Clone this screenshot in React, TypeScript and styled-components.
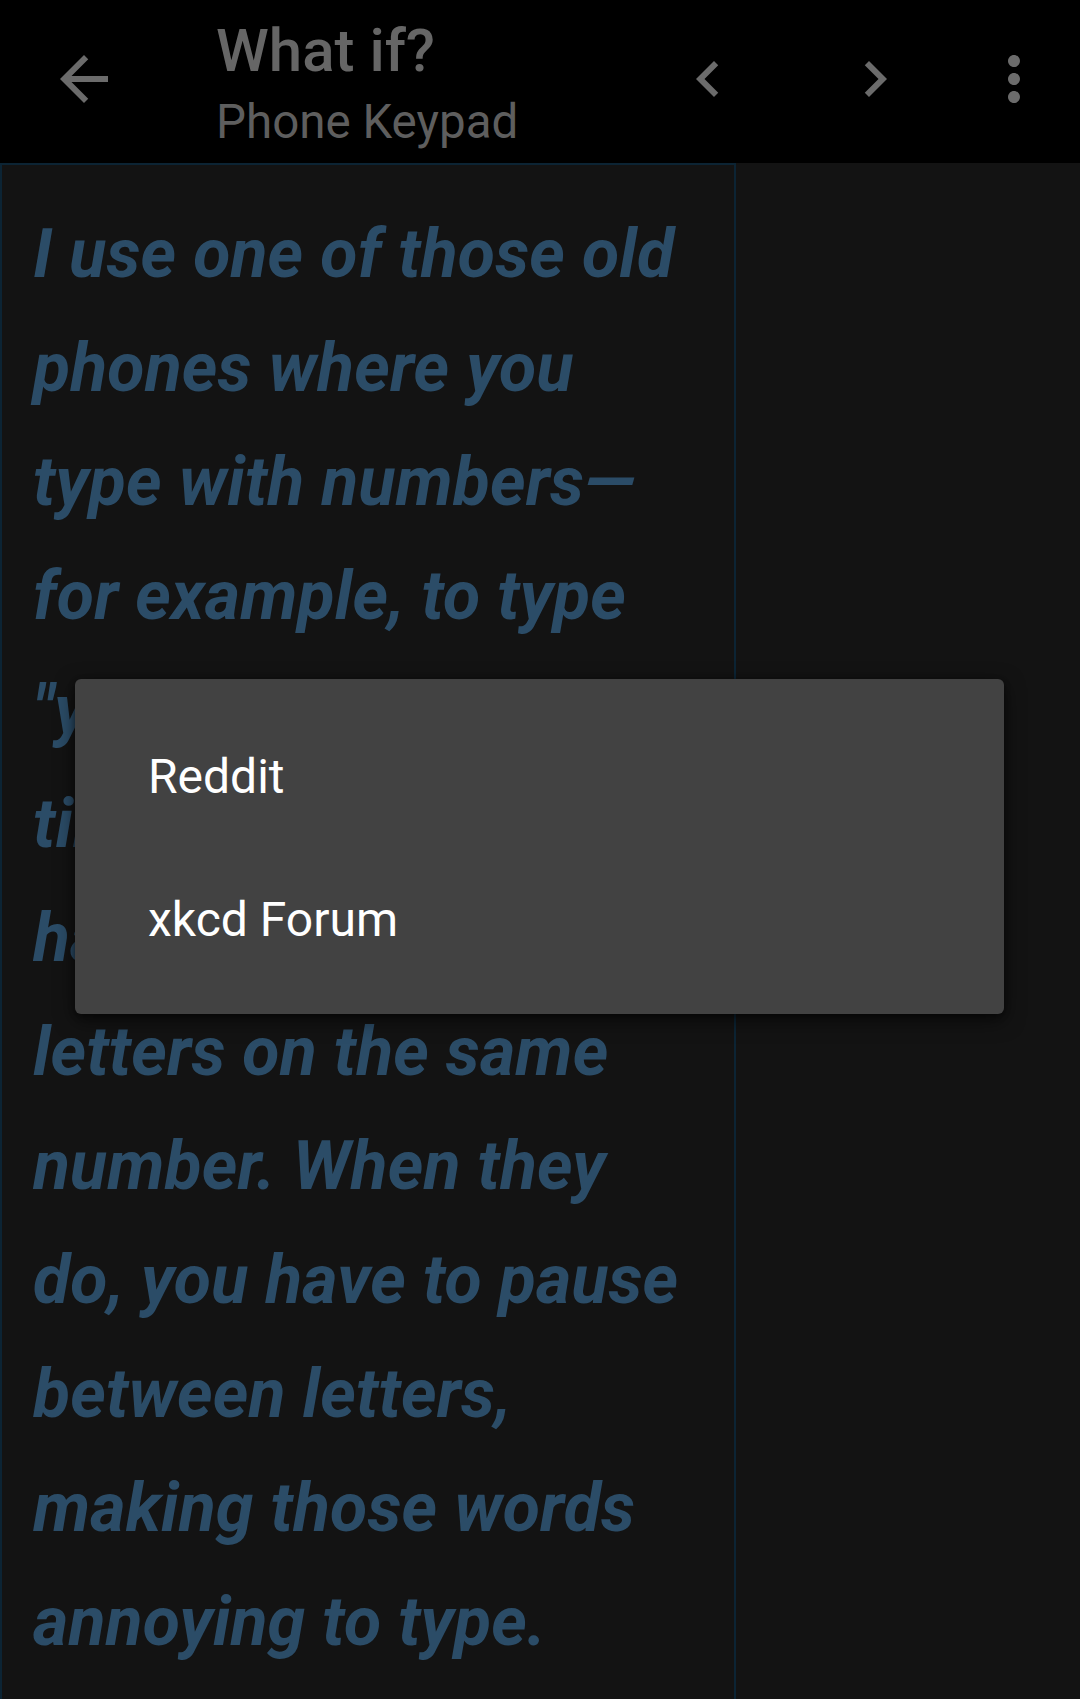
import React from "react";
import styled, { createGlobalStyle } from "styled-components";

const Global = createGlobalStyle`
  html, body {
    margin: 0;
    padding: 0;
    height: 100%;
    overflow: hidden;
    background: #131313;
  }
  #root { height: 100%; }
  * { box-sizing: border-box; }
`;

const Screen = styled.div`
  position: relative;
  width: 1080px;
  height: 1699px;
  display: flex;
  flex-direction: column;
  background: #131313;
  font-family: Roboto, "Liberation Sans", sans-serif;
  overflow: hidden;
`;

const Toolbar = styled.header`
  height: 163px;
  flex: none;
  background: #000;
  display: flex;
  align-items: flex-start;
`;

const IconButton = styled.button<{ $ml: number; $mr?: number }>`
  width: 72px;
  height: 72px;
  margin-left: ${(p) => p.$ml}px;
  margin-right: ${(p) => p.$mr ?? 0}px;
  margin-top: 43px;
  padding: 0;
  border: none;
  background: transparent;
  display: flex;
  align-items: center;
  justify-content: center;
  color: #6b6b6b;
  flex: none;
  svg { width: 72px; height: 72px; fill: currentColor; display: block; }
`;

const Titles = styled.div`
  margin-left: 96px;
  padding-top: 16px;
  flex: 1;
  display: flex;
  flex-direction: column;
`;

const Title = styled.div`
  font-size: 60px;
  font-weight: 500;
  line-height: 70px;
  color: #666666;
`;

const Subtitle = styled.div`
  font-size: 47.5px;
  font-weight: 400;
  line-height: 56px;
  margin-top: 8px;
  color: #5e5e5e;
`;

const Body = styled.main`
  flex: 1;
  display: flex;
`;

const Article = styled.section`
  width: 736px;
  flex: none;
  border: 2px solid #0c2434;
  border-bottom: none;
  padding: 32px 20px 0 31px;
`;

const Question = styled.p`
  margin: 0;
  font-size: 68px;
  font-weight: 700;
  font-style: italic;
  letter-spacing: 0.15px;
  line-height: 114px;
  color: #2b4c67;
  white-space: nowrap;
`;

const Menu = styled.div`
  position: absolute;
  left: 75px;
  top: 679px;
  width: 929px;
  height: 335px;
  padding: 24px 0;
  background: #424242;
  border-radius: 6px;
  box-shadow: 0 6px 20px rgba(0, 0, 0, 0.55), 0 2px 6px rgba(0, 0, 0, 0.4);
  display: flex;
  flex-direction: column;
`;

const MenuItem = styled.div`
  height: 144px;
  padding: 3px 0 0 73px;
  display: flex;
  align-items: center;
  font-size: 48px;
  font-weight: 400;
  color: #ffffff;
`;

const lines = [
  "I use one of those old",
  "phones where you",
  "type with numbers\u2014",
  "for example, to type",
  "\"you\" you'd press",
  "times, and some",
  "have consecutive",
  "letters on the same",
  "number. When they",
  "do, you have to pause",
  "between letters,",
  "making those words",
  "annoying to type.",
];

export default function App() {
  return (
    <>
      <Global />
      <Screen>
        <Toolbar>
          <IconButton $ml={48} aria-label="Back">
            <svg viewBox="0 0 24 24">
              <path d="M20 11H7.83l5.59-5.59L12 4l-8 8 8 8 1.41-1.41L7.83 13H20v-2z" />
            </svg>
          </IconButton>
          <Titles>
            <Title>What if?</Title>
            <Subtitle>Phone Keypad</Subtitle>
          </Titles>
          <IconButton $ml={0} aria-label="Previous">
            <svg viewBox="0 0 24 24">
              <path d="M15.41 7.41L14 6l-6 6 6 6 1.41-1.41L10.83 12z" />
            </svg>
          </IconButton>
          <IconButton $ml={95} aria-label="Next">
            <svg viewBox="0 0 24 24">
              <path d="M10 6L8.59 7.41 13.17 12l-4.58 4.59L10 18l6-6z" />
            </svg>
          </IconButton>
          <IconButton $ml={67} $mr={30} aria-label="More">
            <svg viewBox="0 0 24 24">
              <path d="M12 8c1.1 0 2-.9 2-2s-.9-2-2-2-2 .9-2 2 .9 2 2 2zm0 2c-1.1 0-2 .9-2 2s.9 2 2 2 2-.9 2-2-.9-2-2-2zm0 6c-1.1 0-2 .9-2 2s.9 2 2 2 2-.9 2-2-.9-2-2-2z" />
            </svg>
          </IconButton>
        </Toolbar>
        <Body>
          <Article>
            <Question>
              {lines.map((l, i) => (
                <React.Fragment key={i}>
                  {l}
                  {i < lines.length - 1 && <br />}
                </React.Fragment>
              ))}
            </Question>
          </Article>
        </Body>
        <Menu>
          <MenuItem>Reddit</MenuItem>
          <MenuItem>xkcd Forum</MenuItem>
        </Menu>
      </Screen>
    </>
  );
}
